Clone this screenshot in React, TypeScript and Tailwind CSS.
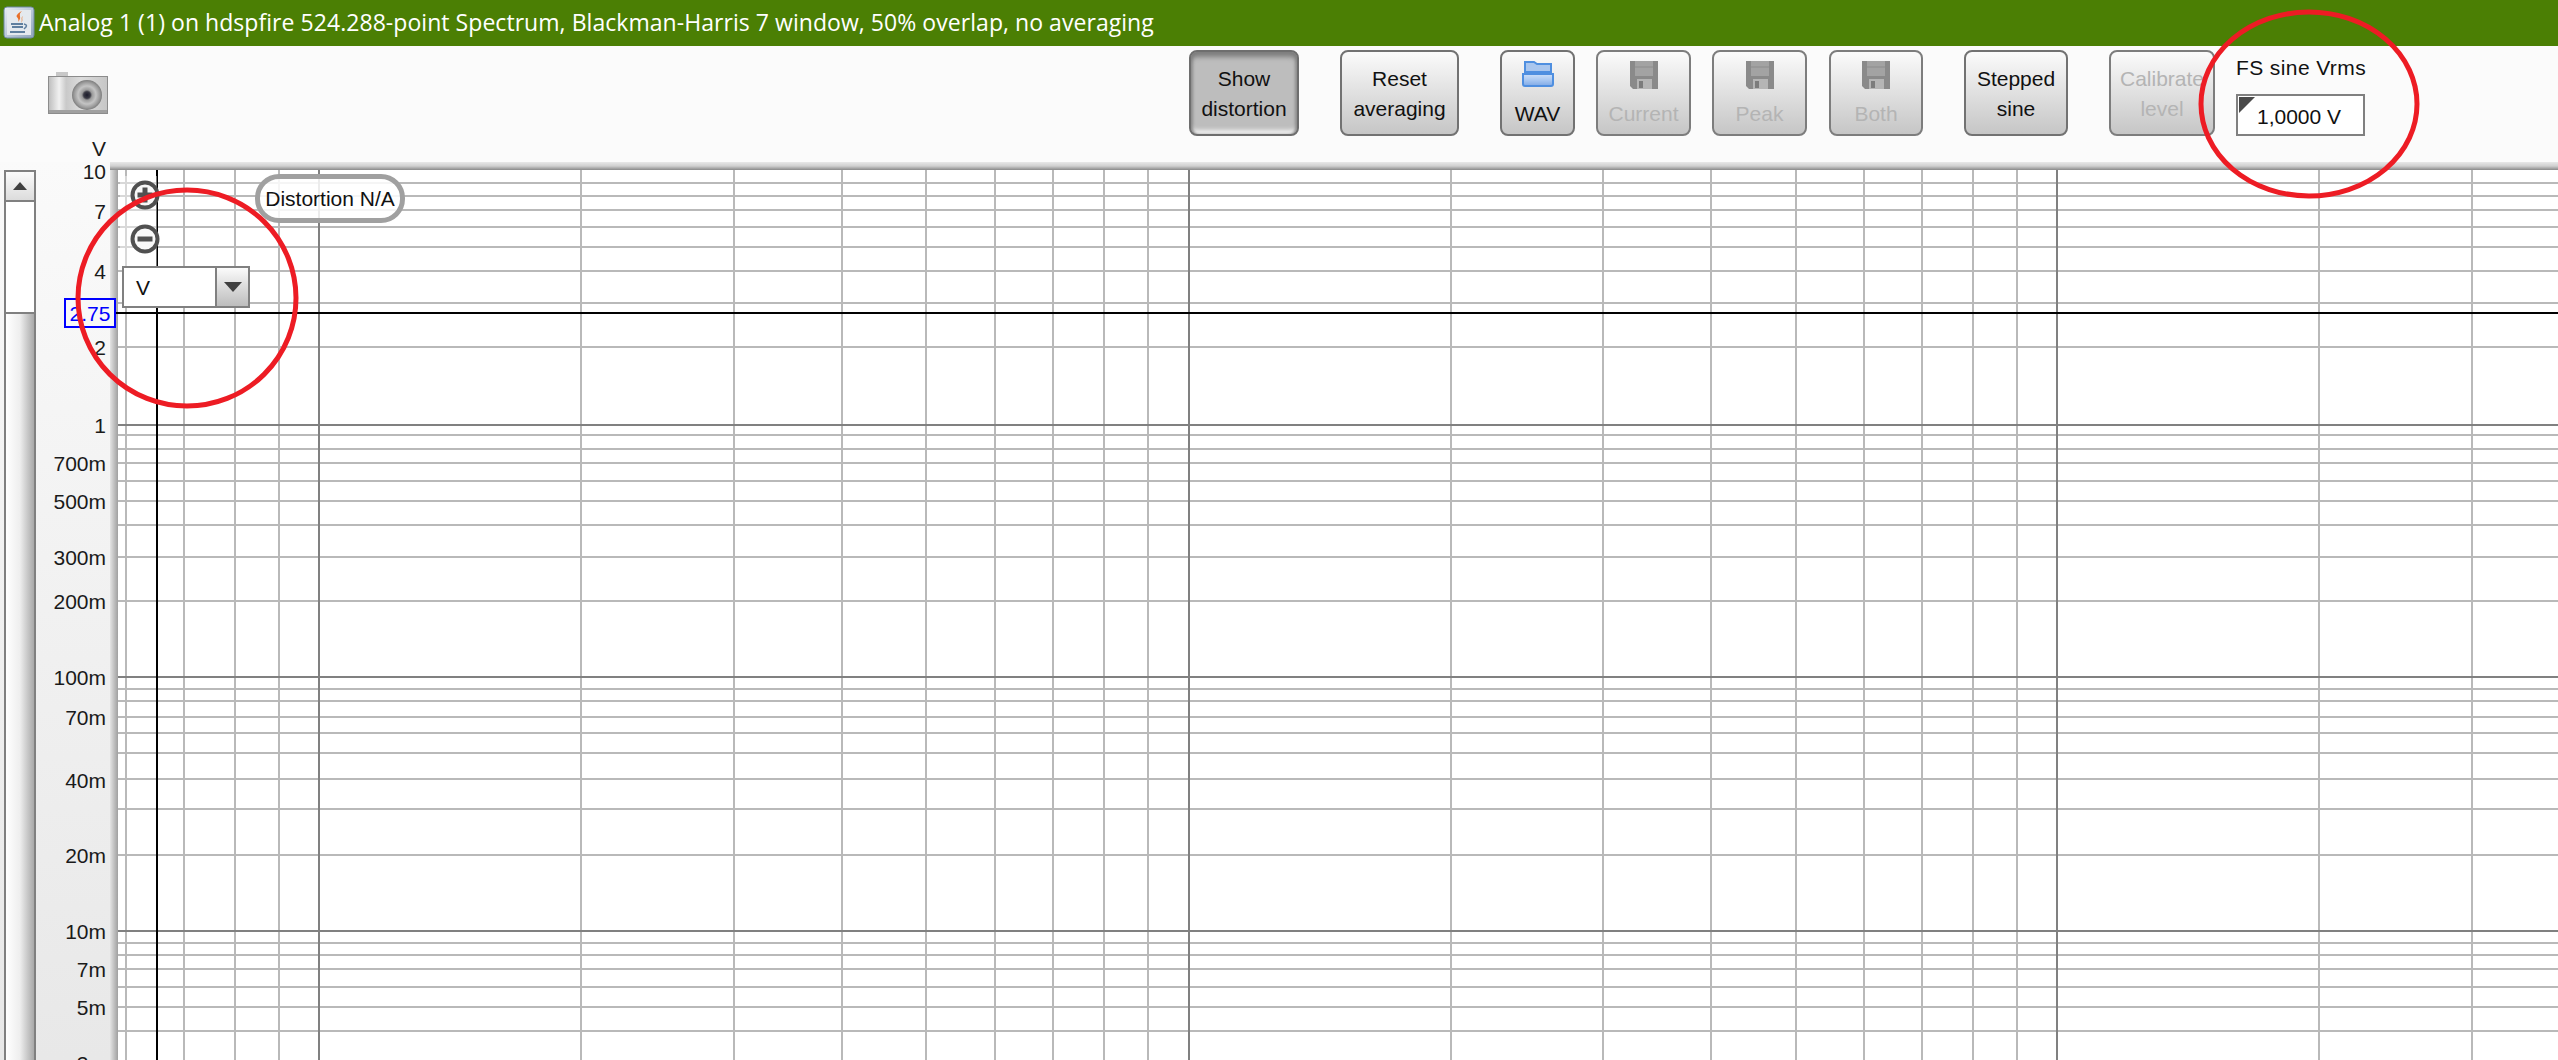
import React from "react";

const FONT = "font-['Liberation_Sans',Arial,sans-serif]";

const lightX = [126, 184, 235, 279, 581, 734, 842, 926, 995, 1053, 1104, 1148, 1451, 1603, 1711, 1796, 1864, 1922, 1973, 2017, 2319, 2472];
const darkX = [319, 1189, 2057];
const lightY = [183, 196, 210, 227, 247, 271, 303, 347, 435, 449, 463, 481, 501, 525, 557, 601, 689, 701, 717, 733, 753, 779, 809, 855, 943, 955, 969, 987, 1007, 1031];
const darkY = [425, 677, 931];

const ticks: [string, number][] = [
  ["V", 149], ["10", 172], ["7", 212], ["4", 272], ["2", 348], ["1", 426], ["700m", 464], ["500m", 502],
  ["300m", 558], ["200m", 602], ["100m", 678], ["70m", 718], ["40m", 781], ["20m", 856], ["10m", 932],
  ["7m", 970], ["5m", 1008], ["3m", 1064],
];

function Grid() {
  return (
    <svg width="2440" height="890" className="block shrink-0">
      {lightY.map((y) => <rect key={y} x="0" y={y - 171} width="2440" height="2" fill="#b9b9b9" />)}
      {lightX.map((x) => <rect key={x} x={x - 119} y="0" width="2" height="890" fill="#b9b9b9" />)}
      {darkY.map((y) => <rect key={y} x="0" y={y - 171} width="2440" height="2" fill="#808080" />)}
      {darkX.map((x) => <rect key={x} x={x - 119} y="0" width="2" height="890" fill="#808080" />)}
      <rect x="38" y="0" width="2" height="890" fill="#000" />
      <rect x="0" y="142" width="2440" height="2" fill="#000" />
    </svg>
  );
}

function Floppy() {
  return (
    <svg width="28" height="28" viewBox="0 0 28 28" className="block">
      <path d="M0 0H28V28H3L0 25Z" fill="#8a8a8a" />
      <rect x="5" y="0" width="18" height="15" fill="#a3a3a3" />
      <rect x="5" y="5" width="18" height="2" fill="#989898" />
      <rect x="7" y="18" width="15" height="10" fill="#b5b5b5" />
      <rect x="9" y="20" width="4" height="7" fill="#7c7c7c" />
    </svg>
  );
}

function Folder() {
  return (
    <svg width="32" height="27" viewBox="0 0 32 27" className="block">
      <defs>
        <linearGradient id="fold" x1="0" y1="0" x2="0" y2="1">
          <stop offset="0" stopColor="#cfe0f8" />
          <stop offset="0.5" stopColor="#a9c8f2" />
          <stop offset="1" stopColor="#7fa9e6" />
        </linearGradient>
      </defs>
      <path d="M3 11V1H12L15 3H29V11Z" fill="#a9c6ee" stroke="#4f8fe0" strokeWidth="2" />
      <path d="M1 13H31V23Q31 25 29 25H3Q1 25 1 23Z" fill="url(#fold)" stroke="#4f8fe0" strokeWidth="2" />
    </svg>
  );
}

function TextButton({ a, b, w, ml, off, on }: { a: string; b: string; w: string; ml: string; off?: boolean; on?: boolean }) {
  return (
    <div
      className={`${w} ${ml} h-[86px] shrink-0 rounded-[8px] border-2 flex flex-col items-center justify-center pt-[2px] text-[21px] leading-[30px] ${
        on
          ? "border-[#6e6e6e] bg-[#bdbdbd] shadow-[inset_0_7px_5px_-2px_#7d7d7d,inset_3px_0_3px_-1px_#8f8f8f,inset_-3px_0_3px_-1px_#8f8f8f,inset_0_-6px_4px_-2px_#f2f2f2] text-[#111]"
          : off
          ? "border-[#7d7d7d] bg-linear-to-b from-[#fbfbfb] to-[#c6c6c6] text-[#b4b4b4]"
          : "border-[#727272] bg-linear-to-b from-[#fbfbfb] to-[#c6c6c6] text-[#111]"
      }`}
    >
      <span>{a}</span>
      <span>{b}</span>
    </div>
  );
}

function IconButton({ label, w, ml, off, children }: { label: string; w: string; ml: string; off?: boolean; children: React.ReactNode }) {
  return (
    <div
      className={`${w} ${ml} h-[86px] shrink-0 rounded-[8px] border-2 flex flex-col items-center pt-[9px] bg-linear-to-b from-[#fbfbfb] to-[#c6c6c6] text-[21px] leading-[30px] ${
        off ? "border-[#7d7d7d] text-[#b4b4b4]" : "border-[#727272] text-[#111]"
      }`}
    >
      <div className="h-[38px]">{children}</div>
      <span className="whitespace-nowrap">{label}</span>
    </div>
  );
}

function JavaIcon() {
  return (
    <svg width="32" height="33" viewBox="0 0 32 33" className="block shrink-0">
      <defs>
        <linearGradient id="jv" x1="0" y1="0" x2="1" y2="1">
          <stop offset="0" stopColor="#e8eef5" />
          <stop offset="1" stopColor="#8ea3bb" />
        </linearGradient>
      </defs>
      <rect x="1" y="1" width="30" height="31" rx="3" fill="url(#jv)" stroke="#6f8aa5" strokeWidth="1" />
      <rect x="4" y="4" width="24" height="25" fill="#e4e9ee" />
      <path d="M19 5C14 9 20 11 15 16C17 12 12 11 14 9C15 7 17 6 19 5Z" fill="#e8702a" />
      <path d="M20 10C17 12 20 14 18 17C21 14 18 13 20 10Z" fill="#ea8a45" />
      <path d="M8 18H20M9 21H20M7 26H22" stroke="#5f7f9f" strokeWidth="2" fill="none" />
      <path d="M21 18Q26 19 21 23" stroke="#5f7f9f" strokeWidth="1.5" fill="none" />
    </svg>
  );
}

function Camera() {
  return (
    <svg width="60" height="42" viewBox="0 0 60 42" className="block shrink-0">
      <defs>
        <linearGradient id="cb" x1="0" y1="0" x2="1" y2="0">
          <stop offset="0" stopColor="#bdbdbd" />
          <stop offset="0.18" stopColor="#f1f1f1" />
          <stop offset="0.3" stopColor="#c9c9c9" />
          <stop offset="0.55" stopColor="#dcdcdc" />
          <stop offset="1" stopColor="#c6c6c6" />
        </linearGradient>
        <radialGradient id="cl" cx="0.5" cy="0.5" r="0.5">
          <stop offset="0" stopColor="#1c1c2c" />
          <stop offset="0.22" stopColor="#3a3a44" />
          <stop offset="0.34" stopColor="#9a9a9a" />
          <stop offset="0.6" stopColor="#c4c4c4" />
          <stop offset="0.85" stopColor="#9b9b9b" />
          <stop offset="1" stopColor="#7d7d7d" />
        </radialGradient>
      </defs>
      <rect x="8" y="0" width="12" height="5" fill="#c8c8c8" />
      <rect x="0.5" y="4.5" width="59" height="37" fill="url(#cb)" stroke="#8c8c8c" />
      <rect x="1" y="38" width="58" height="3" fill="#a0a0a0" />
      <circle cx="39" cy="23" r="15" fill="url(#cl)" />
    </svg>
  );
}

function ZoomIcon({ plus }: { plus?: boolean }) {
  return (
    <svg width="30" height="30" viewBox="0 0 30 30" className="block">
      <circle cx="15" cy="15" r="12.5" fill="#f8f8f8" stroke="#505050" strokeWidth="4" />
      <rect x="7.5" y="12.5" width="15" height="5" fill="#505050" />
      {plus && <rect x="12.5" y="7.5" width="5" height="15" fill="#505050" />}
    </svg>
  );
}

export default function App() {
  return (
    <div className={`${FONT} relative w-[2558px] h-[1060px] overflow-hidden flex flex-col bg-[#fafafa] text-[21px] text-[#111]`}>
      <div className="h-[46px] shrink-0 flex items-center bg-[#4b7f04] pl-[3px] pb-[1px]">
        <JavaIcon />
        <span className="ml-[4px] font-['Open_Sans',sans-serif] text-[23px] tracking-[0.05px] text-white whitespace-nowrap">
          Analog 1 (1) on hdspfire 524.288-point Spectrum, Blackman-Harris 7 window, 50% overlap, no averaging
        </span>
      </div>

      <div className="h-[116px] shrink-0 flex items-start pt-[4px] bg-[#fbfbfb]">
        <div className="ml-[48px] mt-[22px]"><Camera /></div>
        <TextButton a="Show" b="distortion" w="w-[110px]" ml="ml-[1081px]" on />
        <TextButton a="Reset" b="averaging" w="w-[119px]" ml="ml-[41px]" />
        <IconButton label="WAV" w="w-[75px]" ml="ml-[41px]"><Folder /></IconButton>
        <IconButton label="Current" w="w-[95px]" ml="ml-[21px]" off><Floppy /></IconButton>
        <IconButton label="Peak" w="w-[95px]" ml="ml-[21px]" off><Floppy /></IconButton>
        <IconButton label="Both" w="w-[94px]" ml="ml-[22px]" off><Floppy /></IconButton>
        <TextButton a="Stepped" b="sine" w="w-[104px]" ml="ml-[41px]" />
        <TextButton a="Calibrate" b="level" w="w-[106px]" ml="ml-[41px]" off />
        <div className="ml-[21px] w-[129px] shrink-0 flex flex-col">
          <div className="h-[44px] pt-[5px] leading-[26px] tracking-[0.4px] whitespace-nowrap">FS sine Vrms</div>
          <div className="relative h-[42px] border-2 border-[#808080] bg-white flex items-center pl-[19px] leading-none whitespace-nowrap">
            <span className="mt-[3px]">1,0000 V</span>
            <svg width="16" height="16" className="absolute left-[1px] top-[1px]">
              <path d="M0 0H16L0 16Z" fill="#4a4a4a" />
            </svg>
          </div>
        </div>
      </div>

      <div className="flex-1 min-h-0 flex bg-linear-to-b from-[#fafafa] to-[#e8e8e8]">
        <div className="ml-[4px] mt-[8px] w-[32px] shrink-0 flex flex-col border-x-2 border-[#808080]">
          <div className="h-[32px] shrink-0 border-y-2 border-[#808080] bg-linear-to-b from-[#fbfbfb] to-[#dcdcdc] flex items-center justify-center">
            <svg width="14" height="8"><path d="M7 0L14 8H0Z" fill="#404040" /></svg>
          </div>
          <div className="h-[110px] shrink-0 bg-white" />
          <div className="flex-1 border-t-2 border-[#808080] bg-linear-to-r from-white via-[#eeeeee] to-[#a9a9a9]" />
        </div>

        <div className="relative w-[74px] shrink-0">
          {ticks.map(([t, y]) => (
            <span
              key={t}
              className="absolute right-[4px] leading-[24px] whitespace-nowrap text-[#1a1a1a]"
              style={{ top: y - 162 - 12 }}
            >
              {t}
            </span>
          ))}
        </div>

        <div className="flex-1 min-w-0 flex flex-col">
          <div className="h-[8px] shrink-0 bg-linear-to-b from-[#e8e8e8] via-[#d0d0d0] to-[#8a8a8a]" />
          <div className="flex-1 min-h-0 flex">
            <div className="w-[8px] shrink-0 bg-linear-to-r from-[#e4e4e4] to-[#a0a0a0]" />
            <div className="flex-1 min-w-0 overflow-hidden bg-white"><Grid /></div>
          </div>
        </div>
      </div>

      {/* overlays on the plot */}
      <div className="absolute left-[120px] top-[176px] w-[37px] h-[90px] bg-white/45" />
      <div className="absolute left-[130px] top-[180px]"><ZoomIcon plus /></div>
      <div className="absolute left-[130px] top-[224px]"><ZoomIcon /></div>

      <div className="absolute left-[255px] top-[174px] w-[150px] h-[49px] rounded-[24px] border-[5px] border-[#a0a0a0] bg-white/85 flex items-center justify-center whitespace-nowrap text-[#111]">
        Distortion N/A
      </div>

      <div className="absolute left-[122px] top-[266px] w-[128px] h-[42px] border-2 border-[#808080] bg-white flex">
        <div className="flex-1 pl-[12px] leading-[40px]">V</div>
        <div className="w-[33px] border-l-2 border-[#808080] bg-linear-to-b from-[#fbfbfb] to-[#bdbdbd] flex items-center justify-center">
          <svg width="18" height="10"><path d="M0 0H18L9 10Z" fill="#404040" /></svg>
        </div>
      </div>

      <div className="absolute left-[64px] top-[298px] w-[52px] h-[30px] border-2 border-[#0000ff] bg-[#f8f8f8] flex items-center justify-center leading-none text-[#0000ff]">
        2.75
      </div>
      <div className="absolute left-[116px] top-[312px] w-[2px] h-[2px] bg-black" />

      {/* red annotation ellipses */}
      <svg width="230" height="228" className="absolute left-[72px] top-[184px]">
        <ellipse cx="115" cy="114" rx="109" ry="108" fill="none" stroke="#ed1c24" strokeWidth="5" />
      </svg>
      <svg width="228" height="196" className="absolute left-[2195px] top-[6px]">
        <ellipse cx="114" cy="98" rx="108" ry="92" fill="none" stroke="#ed1c24" strokeWidth="5" />
      </svg>
    </div>
  );
}
